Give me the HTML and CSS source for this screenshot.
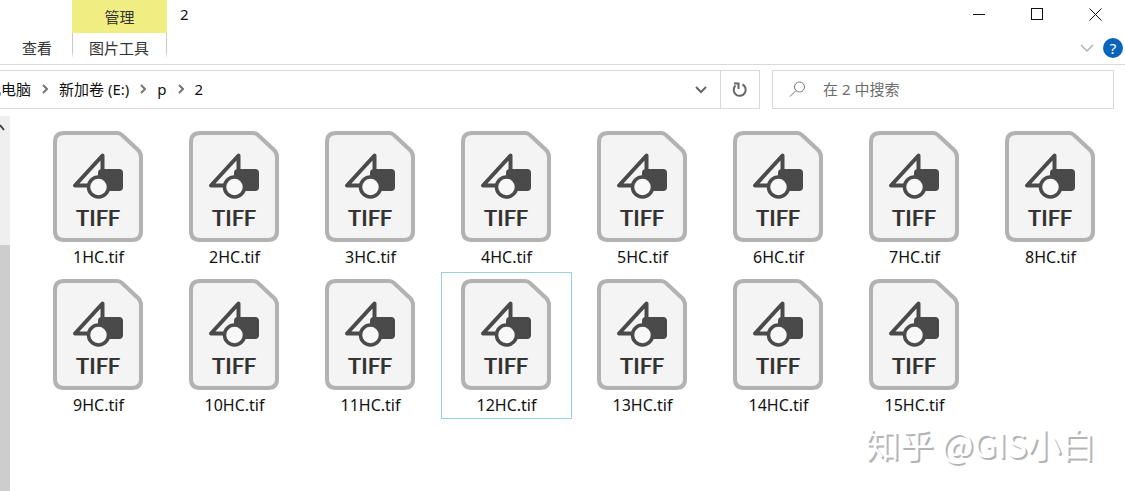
FILE: index.html
```html
<!DOCTYPE html>
<html lang="zh-CN">
<head>
<meta charset="UTF-8">
<meta name="viewport" content="width=device-width, initial-scale=1.0">
<title>2</title>
<link rel="stylesheet" href="styles.css">
</head>
<body>

<header class="ribbon">
  <button class="tab">查看</button>
  <div class="context">
    <span class="context-title">管理</span>
    <button class="tab context-tab">图片工具</button>
  </div>
  <h1 class="window-title">2</h1>
  <div class="ribbon-right">
    <div class="window-buttons">
      <button aria-label="最小化"><svg width="13" height="13"><path d="M0 6.5h12"/></svg></button>
      <button aria-label="最大化"><svg width="13" height="13"><path d="M.5 .5h11v11h-11z"/></svg></button>
      <button aria-label="关闭"><svg class="smooth" width="13" height="13"><path d="M.5 .5l12 12M12.5 .5l-12 12"/></svg></button>
    </div>
    <div class="ribbon-tools">
      <button aria-label="展开功能区"><svg width="14" height="10"><path d="M1 2l6 6 6-6" stroke="#b4b4b4" stroke-width="1.5"/></svg></button>
      <button class="help" aria-label="帮助">?</button>
    </div>
  </div>
</header>

<div class="address-row">
  <div class="address">
    <nav class="crumbs">
      <a href="#">此电脑</a>
      <svg width="6" height="10"><path d="M1 1l4 4-4 4"/></svg>
      <a href="#">新加卷 (E:)</a>
      <svg width="6" height="10"><path d="M1 1l4 4-4 4"/></svg>
      <a href="#">p</a>
      <svg width="6" height="10"><path d="M1 1l4 4-4 4"/></svg>
      <a href="#">2</a>
    </nav>
    <button class="history" aria-label="以前的位置"><svg width="12" height="8"><path d="M1 1l5 5 5-5" stroke="#666" stroke-width="2"/></svg></button>
    <button class="refresh" aria-label="刷新">
      <svg width="16" height="16"><path d="M10.500 2.500A6 6 0 1 1 3.500 3.500" stroke="#666" stroke-width="2"/><path d="M2 1.500h4.500V7" stroke="#666" stroke-width="2"/></svg>
    </button>
  </div>
  <div class="search">
    <svg width="17" height="17"><circle cx="10.500" cy="6" r="5"/><path d="M7 9.500L1 15.500"/></svg>
    <input type="text" placeholder="在 2 中搜索" aria-label="在 2 中搜索">
  </div>
</div>

<main class="content">
  <div class="scrollbar">
    <svg width="5" height="8"><path d="M0 1l4 5" stroke="#444" stroke-width="2"/></svg>
    <div class="thumb"></div>
  </div>
  <ul class="files" id="files"></ul>
</main>

<div class="watermark">知乎 @GIS小白</div>

<script>
var selected = 12;
var files = document.getElementById('files');

for (var i = 1; i <= 15; i++) {
  var item = document.createElement('li');
  item.innerHTML = `
    <button class="file${i === selected ? ' selected' : ''}">
      <span class="icon">
        <svg viewBox="0 0 90 111">
          <path d="M11 2H64Q67 2 69 4L85 19Q88 22 88 26V100Q88 109 79 109H11Q2 109 2 100V11Q2 2 11 2Z" fill="#f4f4f4" stroke="#b2b2b2" stroke-width="4"/>
          <path d="M22 54.500L49.500 24.500V54.500Z" fill="#f4f4f4" stroke="#4a4a4a" stroke-width="4" stroke-linejoin="round"/>
          <rect x="45" y="38" width="25" height="22" rx="4" fill="#4a4a4a" stroke="none"/>
          <circle cx="45.500" cy="56" r="10" fill="#f8f8f8" stroke="#4a4a4a" stroke-width="3.500"/>
        </svg>
        <span class="type">TIFF</span>
      </span>
      <span class="name">${i}HC.tif</span>
    </button>`;
  files.appendChild(item);
}
</script>

</body>
</html>
```
FILE: styles.css
```css
* {
  box-sizing: border-box;
}
body {
  margin: 0;
  min-height: 100vh;
  display: flex;
  flex-direction: column;
  background: #fff;
  color: #111;
  font-family: "Noto Sans", "Noto Sans CJK SC", sans-serif;
  font-size: 15px;
  line-height: 20px;
  overflow: hidden;
}
button {
  padding: 0;
  border: 0;
  background: none;
  color: inherit;
  font: inherit;
}
svg {
  display: block;
  flex: none;
  fill: none;
  stroke: #111;
}

/* ribbon */
.ribbon {
  display: flex;
  border-bottom: 1px solid #d9d9d9;
}
.tab {
  align-self: flex-end;
  padding: 6px 20px 6px 22px;
  color: #333;
}
.context {
  display: flex;
  flex-direction: column;
  text-align: center;
  color: #333;
}
.context-title {
  padding: 7px 0 6px;
  background: #f0ee82;
}
.context-tab {
  align-self: stretch;
  padding: 5px 17px 6px 16px;
  border: 1px solid;
  border-width: 0 1px;
  border-image: linear-gradient(#c8c8c8 60%, #fff 80%) 1;
}
.window-title {
  margin: 4px 0 0 13px;
  font-size: 15px;
  font-weight: normal;
  line-height: 20px;
}
.ribbon-right {
  margin-left: auto;
}
.window-buttons {
  display: flex;
  padding-right: 1px;
}
.window-buttons button {
  display: grid;
  place-items: center;
  width: 58px;
  height: 28px;
}
.window-buttons svg {
  shape-rendering: crispEdges;
}
.window-buttons .smooth {
  shape-rendering: auto;
}
.ribbon-tools {
  display: flex;
  justify-content: flex-end;
  align-items: center;
  gap: 9px;
  padding: 10px 2px 0 0;
}
.help {
  width: 20px;
  height: 20px;
  border-radius: 50%;
  background: #0a64bc;
  color: #fff;
}

/* address bar */
.address-row {
  display: grid;
  grid-template-columns: 760fr 342fr;
  gap: 12px;
  padding: 5px 11px 7px 0;
}
.address, .search {
  display: flex;
  align-items: center;
  height: 39px;
  border: 1px solid #d9d9d9;
}
.address {
  border-left: 0;
}
.crumbs {
  display: flex;
  align-items: center;
  gap: 11px;
  flex: 1;
  margin-left: -14px;
  padding-bottom: 2px;
}
.crumbs a {
  color: #111;
  text-decoration: none;
}
.crumbs svg {
  stroke: #777;
  stroke-width: 2;
}
.history, .refresh {
  display: grid;
  place-items: center;
  width: 39px;
  height: 100%;
}
.refresh {
  border-left: 1px solid #d9d9d9;
}
.search {
  padding-left: 16px;
  gap: 17px;
}
.search svg {
  stroke: #777;
}
.search input {
  flex: 1;
  min-width: 0;
  padding: 0 0 2px;
  border: 0;
  outline: 0;
  font: inherit;
}
.search input::placeholder {
  color: #6d6d6d;
}

/* file list */
.content {
  display: flex;
  flex: 1;
}
.scrollbar {
  display: flex;
  flex-direction: column;
  width: 10px;
  padding-top: 8px;
  background: #efefef;
}
.thumb {
  flex: 1;
  margin-top: 113px;
  background: #cdcdcd;
}
.files {
  display: flex;
  flex-wrap: wrap;
  align-content: flex-start;
  gap: 1px 5px;
  flex: 1;
  margin: 0;
  padding: 8px 0 0 23px;
  list-style: none;
}
.file {
  display: flex;
  flex-direction: column;
  align-items: center;
  gap: 5px;
  width: 131px;
  padding: 6px 0 3px;
  border: 1px solid transparent;
}
.file.selected {
  border-color: #99d1e0;
}
.icon {
  display: grid;
  width: 90px;
  margin-right: 2px;
}
.icon svg, .type {
  grid-area: 1 / 1;
}
.type {
  place-self: end center;
  margin-bottom: 14px;
  color: #333;
  font-family: "Noto Sans CJK SC", sans-serif;
  font-size: 22px;
  line-height: 24px;
  text-shadow: 1px 0 0 #333;
}
.name {
  font-size: 16px;
}

.watermark {
  position: absolute;
  right: 30px;
  bottom: 27px;
  color: #fff;
  font-family: "Noto Sans CJK SC", sans-serif;
  font-size: 34px;
  line-height: 40px;
  text-shadow: 2px 2px 0 #b4b4b4;
}
```
